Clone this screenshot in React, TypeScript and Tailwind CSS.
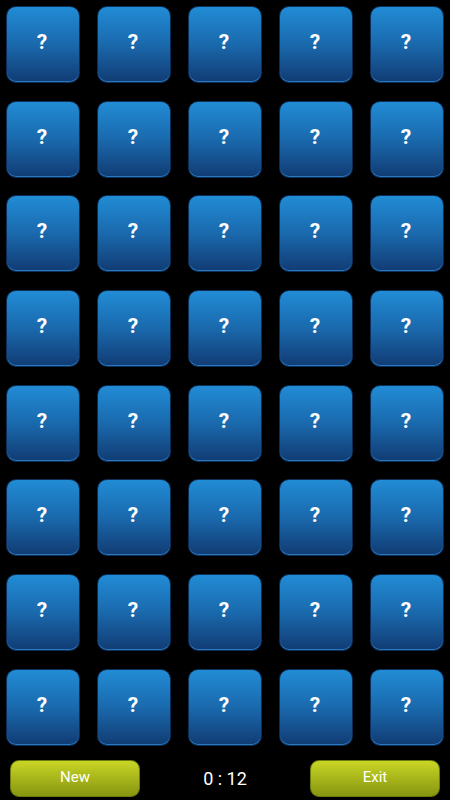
import React from "react";

export default function App() {
  const tiles = Array.from({ length: 40 }, (_, i) => i);
  return (
    <div
      className="w-[450px] h-[800px] bg-black flex flex-col overflow-hidden"
      style={{ fontFamily: "Roboto, 'Liberation Sans', sans-serif" }}
    >
      <div className="grid grid-cols-[repeat(5,74px)] gap-x-[17px] gap-y-[17.7px] pl-[6px] pt-[6px]">
        {tiles.map((i) => (
          <div
            key={i}
            className="h-[77px] rounded-[10px] border border-[#0c2f58] bg-gradient-to-b from-[#218cd5] via-[#1a69ad] to-[#113c74] shadow-[inset_0_-1px_0_#2a78c0] flex items-center justify-center"
          >
            <span className="text-white font-bold text-[21px] leading-none -mt-[4px] -ml-[2px]">?</span>
          </div>
        ))}
      </div>
      <div className="flex items-center mt-[14px] pl-[10px] pr-[10px]">
        <button className="w-[130px] h-[37px] rounded-[9px] bg-gradient-to-b from-[#c9d625] to-[#869610] border border-[#6d7a0c] text-white text-[15px] flex items-center justify-center pb-[3px]">
          New
        </button>
        <div className="flex-1 text-center text-white text-[18px] pt-[1px]">0 : 12</div>
        <button className="w-[130px] h-[37px] rounded-[9px] bg-gradient-to-b from-[#c9d625] to-[#869610] border border-[#6d7a0c] text-white text-[15px] flex items-center justify-center pb-[3px]">
          Exit
        </button>
      </div>
    </div>
  );
}
